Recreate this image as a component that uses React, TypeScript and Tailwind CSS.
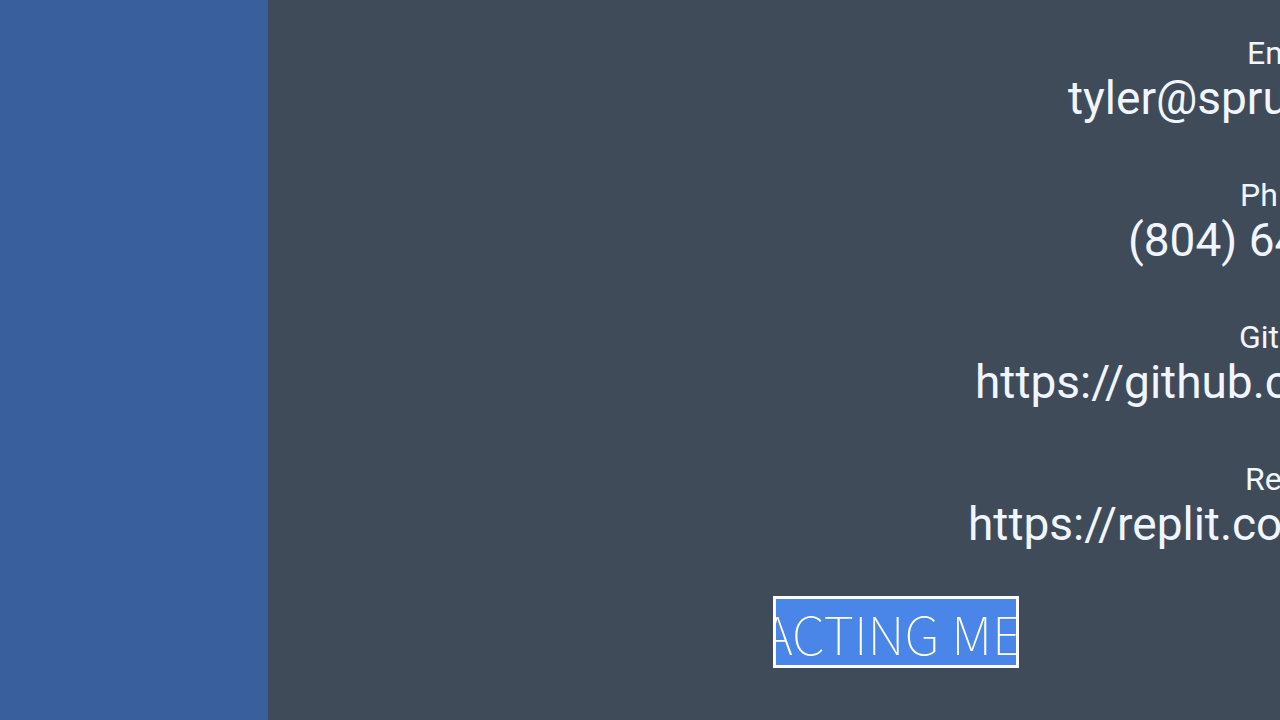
const rows = [
  { label: "Em", value: "tyler@spru", labelPad: "pl-[979px]", valuePad: "pl-[800px]" },
  { label: "Ph", value: "(804) 64", labelPad: "pl-[972px]", valuePad: "pl-[860px]" },
  { label: "Git", value: "https://github.c", labelPad: "pl-[971px]", valuePad: "pl-[707px]" },
  { label: "Re", value: "https://replit.co", labelPad: "pl-[977px]", valuePad: "pl-[700px]" },
];

export default function App() {
  return (
    <div className="flex min-h-screen overflow-hidden bg-[#404b5a] font-['Roboto',sans-serif] text-[#f0f6ff]">
      <aside className="w-[268px] shrink-0 bg-[#39609c]" />
      <main className="min-w-0 flex-1 overflow-hidden pt-8">
        <dl className="flex flex-col gap-[52px]">
          {rows.map((row) => (
            <div key={row.label} className="whitespace-nowrap">
              <dt className={`${row.labelPad} text-[32px] leading-[42px]`}>{row.label}</dt>
              <dd className={`${row.valuePad} text-[46px] leading-[48px]`}>{row.value}</dd>
            </div>
          ))}
        </dl>
        <button
          type="button"
          className="mt-12 ml-[505px] flex h-[72px] w-[246px] items-center justify-center overflow-hidden border-[3px] border-white bg-[#4a86e8] pr-2 font-['Noto_Sans_CJK_JP',sans-serif] text-[53px] leading-[60px] font-thin whitespace-nowrap text-white"
        >
          ACTING ME
        </button>
      </main>
    </div>
  );
}
